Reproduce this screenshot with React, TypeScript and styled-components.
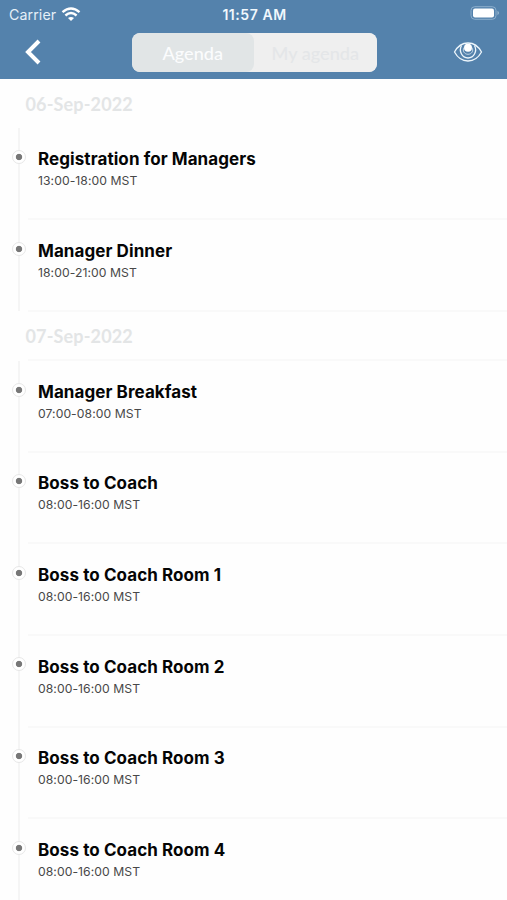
import React from "react";
import styled, { createGlobalStyle } from "styled-components";

const GlobalStyle = createGlobalStyle`
  * { box-sizing: border-box; }
  body { margin: 0; background: #fefefe; overflow: hidden; }
`;

const Screen = styled.main`
  width: 507px;
  height: 900px;
  overflow: hidden;
  background: #fefefe;
  font-family: Inter, "Liberation Sans", sans-serif;
`;

const Header = styled.header`
  height: 79px;
  background: #5482ac;
  color: #fff;
`;

const StatusBar = styled.div`
  display: grid;
  grid-template-columns: 1fr auto 1fr;
  align-items: center;
  height: 28px;
  padding: 0 7px 0 9px;
`;

const Carrier = styled.div`
  display: flex;
  align-items: center;
  gap: 5px;
  font-size: 14.2px;
  letter-spacing: 0.1px;
  color: #e6f0f8;
`;

const Clock = styled.div`
  font-size: 14px;
  font-weight: 600;
  letter-spacing: 0.55px;
  color: #f1f8fd;
`;

const Battery = styled.svg`
  display: block;
  justify-self: end;
`;

const NavBar = styled.nav`
  display: flex;
  align-items: center;
  height: 48px;
  padding: 0 22px 0 24px;
`;

const IconButton = styled.button`
  display: flex;
  align-items: center;
  width: 32px;
  height: 32px;
  padding: 0;
  border: 0;
  background: none;
  color: #fff;
`;

const Segments = styled.div`
  display: flex;
  width: 245px;
  height: 39px;
  margin-left: 75.5px;
  margin-right: auto;
  overflow: hidden;
  border-radius: 8px;
  background: #efefef;
`;

const Segment = styled.button<{ $active?: boolean }>`
  flex: 1;
  padding: 1px 0 0;
  border: 0;
  border-radius: 8px;
  background: ${(p) => (p.$active ? "#e1e5e6" : "#efefef")};
  color: ${(p) => (p.$active ? "#fbfcfd" : "#e4e6e8")};
  font: 500 18.1px Lato, sans-serif;
`;

const DateHeading = styled.h2`
  display: flex;
  align-items: center;
  height: 49px;
  margin: 0;
  padding: 0 0 0 25.5px;
  color: #e3e5e6;
  font: 700 18px Lato, sans-serif;
  letter-spacing: 0.15px;
`;

const Events = styled.ul`
  margin: 0;
  padding: 0;
  list-style: none;
`;

const Event = styled.li`
  display: grid;
  grid-template-columns: 28px 1fr;
  height: 91.6px;
`;

const Rail = styled.div`
  display: flex;
  justify-content: center;
  padding: 22px 0 0 10px;
  background: linear-gradient(#f5f5f5, #f5f5f5) 18px 0 / 2px 100% no-repeat;
`;

const Marker = styled.span`
  flex: none;
  width: 14px;
  height: 14px;
  border: 1px solid #e7e7e7;
  border-radius: 50%;
  background: radial-gradient(circle, #777 2.8px, #fff 3.6px);
`;

const Details = styled.div<{ $ruled?: boolean }>`
  margin-top: -1.4px;
  padding: 20.6px 0 0 10px;
  border-top: 2px solid ${(p) => (p.$ruled ? "#f9f9f9" : "transparent")};
`;

const Title = styled.h3`
  margin: 0;
  color: #050505;
  font-size: 17px;
  font-weight: 650;
  line-height: 20px;
  letter-spacing: 0.08px;
  white-space: nowrap;
`;

const Time = styled.p`
  margin: 4px 0 0;
  color: #484848;
  font-size: 12.2px;
  line-height: 16px;
  letter-spacing: 0.06px;
  white-space: nowrap;
`;

const days = [
  {
    date: "06-Sep-2022",
    events: [
      ["Registration for Managers", "13:00-18:00 MST"],
      ["Manager Dinner", "18:00-21:00 MST"],
    ],
  },
  {
    date: "07-Sep-2022",
    events: [
      ["Manager Breakfast", "07:00-08:00 MST"],
      ["Boss to Coach", "08:00-16:00 MST"],
      ["Boss to Coach Room 1", "08:00-16:00 MST"],
      ["Boss to Coach Room 2", "08:00-16:00 MST"],
      ["Boss to Coach Room 3", "08:00-16:00 MST"],
      ["Boss to Coach Room 4", "08:00-16:00 MST"],
    ],
  },
];

const Day = styled.section`
  & + & > h2 {
    background: linear-gradient(#f9f9f9, #f9f9f9) 28px 0 / 100% 2px no-repeat;
    margin-top: -1px;
    padding-top: 1px;
    height: 50.4px;
  }
`;

export default function App() {
  return (
    <Screen>
      <GlobalStyle />
      <Header>
        <StatusBar>
          <Carrier>
            Carrier
            <svg width="20" height="15" viewBox="0 0 20 15" fill="none" stroke="#fff" strokeWidth="2.4">
              <path d="M1.5 5.1Q10-2.3 18.5 5.1M4.4 8.5Q10 3.6 15.6 8.5" />
              <path d="M7 11.1Q10 8.7 13 11.1L10 14.1Z" fill="#fff" stroke="none" />
            </svg>
          </Carrier>
          <Clock>11:57 AM</Clock>
          <Battery width="30" height="16" viewBox="0 0 30 16">
            <rect x="1" y=".7" width="25" height="12.6" rx="3.7" fill="none" stroke="#8dafcd" />
            <rect x="3" y="2.6" width="21" height="8.8" rx="2" fill="#fff" />
            <path d="M27.5 4.8Q30.5 7 27.5 9.2Z" fill="#9ab7d0" />
          </Battery>
        </StatusBar>
        <NavBar>
          <IconButton aria-label="Back">
            <svg width="18" height="26" viewBox="0 0 18 26" fill="none" stroke="currentColor" strokeWidth="4">
              <path d="M15 2L4 13L15 24" />
            </svg>
          </IconButton>
          <Segments>
            <Segment $active>Agenda</Segment>
            <Segment>My agenda</Segment>
          </Segments>
          <IconButton aria-label="Visibility">
            <svg width="30" height="22" viewBox="0 0 30 22" fill="none" stroke="#edf6fc" strokeWidth="1.3">
              <path d="M1.5 11C8 -1 22 -1 28.5 11C22 23 8 23 1.5 11Z" />
              <path d="M8.5 4.5C5.5 10 9 17 15 17S24.5 10 21.5 4.5" />
              <path d="M11 6.5C9 10 11.5 13.3 15 13.3S21 10 19 6.5" strokeWidth="0.7" />
              <circle cx="15" cy="6.8" r="4" fill="#fff" stroke="none" />
            </svg>
          </IconButton>
        </NavBar>
      </Header>
      {days.map((day, dayIndex) => (
        <Day key={day.date}>
          <DateHeading>{day.date}</DateHeading>
          <Events>
            {day.events.map(([title, time], index) => (
              <Event key={title}>
                <Rail>
                  <Marker />
                </Rail>
                <Details $ruled={dayIndex > 0 || index > 0}>
                  <Title>{title}</Title>
                  <Time>{time}</Time>
                </Details>
              </Event>
            ))}
          </Events>
        </Day>
      ))}
    </Screen>
  );
}
